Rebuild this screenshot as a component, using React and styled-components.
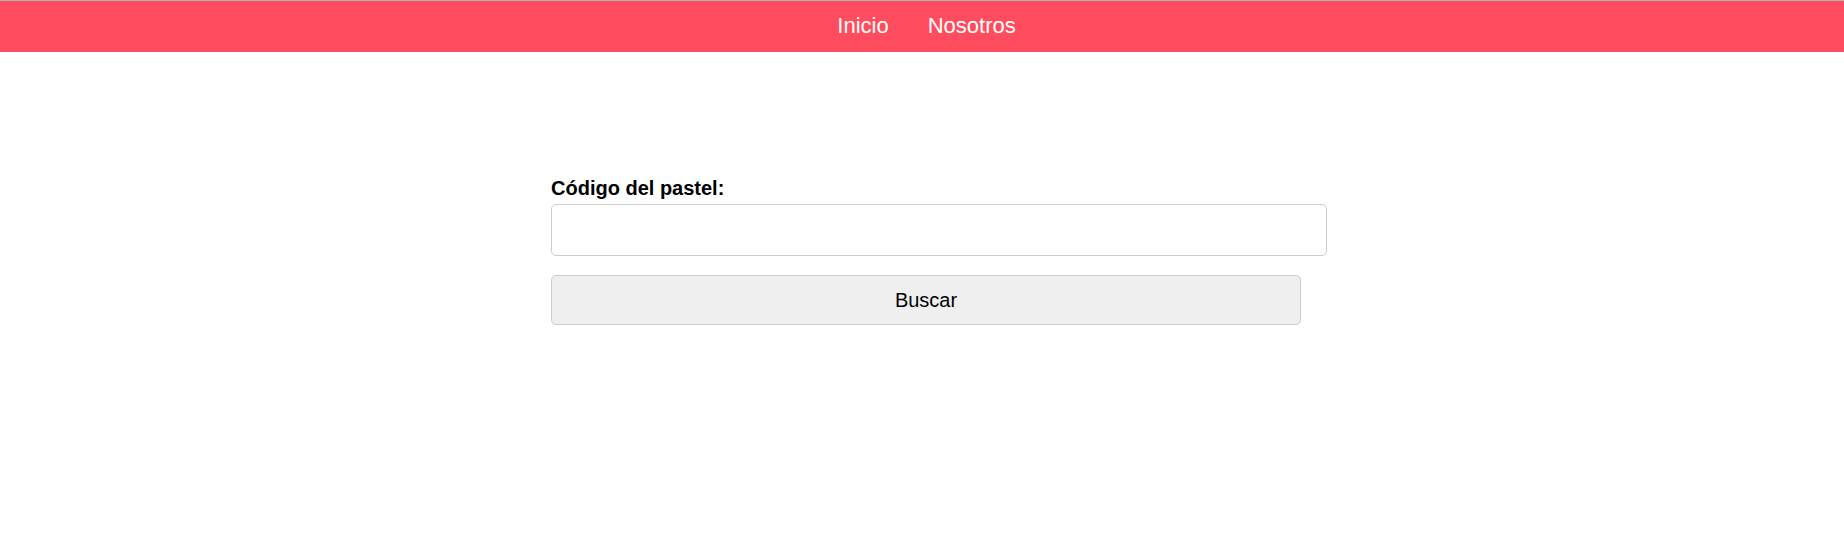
import React, { useState } from "react";
import styled, { createGlobalStyle } from "styled-components";

const GlobalStyle = createGlobalStyle`
  html, body {
    margin: 0;
    padding: 0;
    background: #ffffff;
    font-family: "Liberation Sans", Arial, sans-serif;
  }
`;

function App() {
  const [codigo, setCodigo] = useState("");

  return (
    <>
      <GlobalStyle />
      <NavBar>
        <NavLink href="#">Inicio</NavLink>
        <NavLink href="#">Nosotros</NavLink>
      </NavBar>
      <Main>
        <Form onSubmit={(e) => e.preventDefault()}>
          <Label htmlFor="codigo">Código del pastel:</Label>
          <Input
            id="codigo"
            type="text"
            value={codigo}
            onChange={(e) => setCodigo(e.target.value)}
          />
          <Button type="submit">Buscar</Button>
        </Form>
      </Main>
    </>
  );
}

const NavBar = styled.nav`
  display: flex;
  justify-content: center;
  align-items: center;
  gap: 39px;
  height: 52px;
  padding-left: 9px;
  padding-bottom: 1px;
  box-sizing: border-box;
  background: #ff4c5e;
  border-top: 1px solid #b3b3b3;
`;

const NavLink = styled.a`
  color: #ffffff;
  font-size: 22px;
  text-decoration: none;
`;

const Main = styled.main`
  display: flex;
  justify-content: center;
  padding: 125px 0 0 8px;
`;

const Form = styled.form`
  display: flex;
  flex-direction: column;
  align-items: flex-start;
  width: 750px;
`;

const Label = styled.label`
  font-size: 20px;
  font-weight: bold;
  color: #000000;
  margin-bottom: 4px;
`;

const Input = styled.input`
  width: 100%;
  height: 50px;
  padding: 0 12px;
  border: 1.5px solid #cccccc;
  border-radius: 5px;
  font-size: 18px;
  font-family: inherit;
  outline: none;
`;

const Button = styled.button`
  width: 100%;
  height: 50px;
  margin-top: 19px;
  background: #efefef;
  border: 1px solid #cccccc;
  border-radius: 5px;
  font-size: 20px;
  font-family: inherit;
  color: #000000;
  cursor: pointer;
`;

export default App;
